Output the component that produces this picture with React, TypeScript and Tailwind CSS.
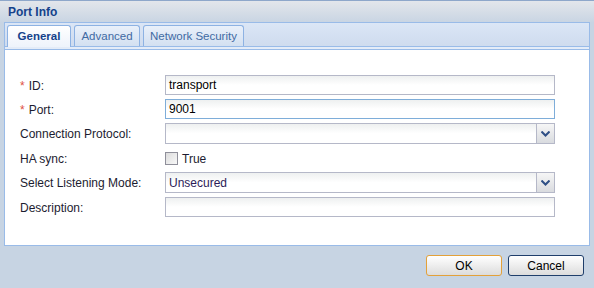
import React from "react";

function Chevron() {
  return (
    <svg width="9" height="6" viewBox="0 0 9 6">
      <path d="M0.5 0.5 L4.5 4.5 L8.5 0.5" fill="none" stroke="#2f4f86" strokeWidth="2" />
    </svg>
  );
}

function TextBox({ value, focused }: { value?: string; focused?: boolean }) {
  return (
    <div
      className={`w-[390px] h-[20px] border ${
        focused ? "border-[#7eadd9]" : "border-[#b5b8c8]"
      } bg-gradient-to-b from-[#eef0f0] via-white to-white flex items-center px-[3px] text-black`}
    >
      {value}
    </div>
  );
}

function Combo({ value }: { value?: string }) {
  return (
    <div className="w-[390px] h-[21px] flex">
      <div className="flex-1 border border-[#b5b8c8] bg-gradient-to-b from-[#eef0f0] via-white to-white flex items-center px-[3px] text-[#2c1c58]">
        {value}
      </div>
      <div className="w-[18px] border border-l-0 border-[#b5b8c8] bg-gradient-to-b from-[#f6f6f6] to-[#d9dbdf] flex items-center justify-center">
        <Chevron />
      </div>
    </div>
  );
}

function Row({ label, required, children, className }: { label: string; required?: boolean; children: React.ReactNode; className?: string }) {
  return (
    <div className={`flex items-center ${className ?? ""}`}>
      <div className="w-[145px] text-[#1c1c30] pt-px">
        {required && <span className="text-[#e0513f] mr-[4px]">*</span>}
        {label}
      </div>
      {children}
    </div>
  );
}

export default function App() {
  return (
    <div className="w-[594px] h-[288px] overflow-hidden bg-[#c7d4e3] border-t border-[#8ea7ca] flex flex-col font-['Liberation_Sans',Arial,sans-serif] text-[12px]">
      <div className="h-[21px] shrink-0 bg-gradient-to-b from-[#e3e6eb] to-[#c9d5e3] flex items-center pl-[8px] font-bold text-[12px] text-[#15428b]">
        Port Info
      </div>

      <div className="ml-[4px] mr-[4px] flex flex-col">
        {/* tab strip */}
        <div className="h-[25px] border-t border-x border-[#99bbe8] bg-gradient-to-b from-[#dbe6f6] to-[#cedbee] flex items-end pl-[2px] gap-[3px] relative text-[11.5px]">
          <div className="absolute left-0 right-0 bottom-0 h-px bg-[#99bbe8]" />
          <div className="relative z-10 w-[64px] h-[22px] pt-px rounded-t-[3px] border border-b-0 border-[#8db2e3] bg-gradient-to-b from-white to-[#eef3fb] flex items-center justify-center font-bold text-[#15428b]">
            General
          </div>
          <div className="relative w-[66px] h-[21px] pt-px mb-px rounded-t-[3px] border border-b-0 border-[#8db2e3] bg-gradient-to-b from-[#e9f0fa] to-[#d3e0f1] flex items-center justify-center text-[#416aa3]">
            Advanced
          </div>
          <div className="relative w-[101px] h-[21px] pt-px mb-px rounded-t-[3px] border border-b-0 border-[#8db2e3] bg-gradient-to-b from-[#e9f0fa] to-[#d3e0f1] flex items-center justify-center text-[#416aa3]">
            Network Security
          </div>
        </div>
        <div className="h-[3px] border-x border-b border-[#99bbe8] bg-[#e4ecf8]" />

        {/* body */}
        <div className="h-[196px] bg-white border-x border-b border-[#99bbe8] pl-[15px] pt-[25px] flex flex-col">
          <Row label="ID:" required>
            <TextBox value="transport" />
          </Row>
          <Row label="Port:" required className="mt-[4px]">
            <TextBox value="9001" focused />
          </Row>
          <Row label="Connection Protocol:" className="mt-[4px]">
            <Combo />
          </Row>
          <Row label="HA sync:" className="mt-[4px] h-[20px]">
            <div className="flex items-center text-[#1c1c30]">
              <div className="w-[13px] h-[13px] border border-[#8f8f9a] bg-gradient-to-br from-[#dcdcdc] to-[#f8f8f8]" />
              <span className="ml-[4px] pt-px">True</span>
            </div>
          </Row>
          <Row label="Select Listening Mode:" className="mt-[4px]">
            <Combo value="Unsecured" />
          </Row>
          <Row label="Description:" className="mt-[4px]">
            <TextBox />
          </Row>
        </div>
      </div>

      {/* footer */}
      <div className="flex justify-end gap-[6px] pr-[10px] pt-[9px]">
        <button className="w-[76px] h-[21px] rounded-[3px] border border-[#e3a13a] bg-gradient-to-b from-white to-[#dcdcdc] text-black">
          OK
        </button>
        <button className="w-[76px] h-[21px] rounded-[3px] border border-[#1f3e6b] bg-gradient-to-b from-white to-[#dcdcdc] text-black">
          Cancel
        </button>
      </div>
    </div>
  );
}
